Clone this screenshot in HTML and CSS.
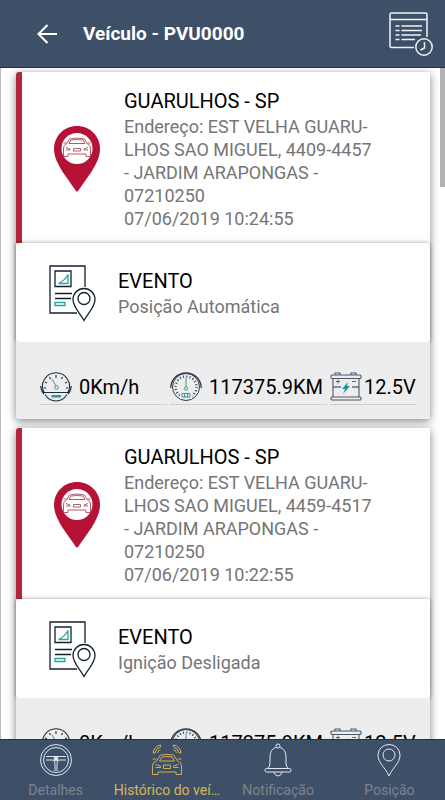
FILE: index.html
```html
<!DOCTYPE html>
<html lang="pt-BR">
<head>
<meta charset="utf-8">
<meta name="viewport" content="width=device-width, initial-scale=1">
<title>Veículo - PVU0000</title>
<link rel="stylesheet" href="styles.css">
</head>
<body>
<svg class="sprite" aria-hidden="true">
  <symbol id="car-pin" viewBox="0 0 46 66">
    <path fill="#b51235" d="M23 0C10 0 0 10 0 23c0 8 4 15 8 22l14 20q1 1 2 0l14-20c4-7 8-14 8-22C46 10 36 0 23 0z"/>
    <circle cx="23" cy="22.500" r="15.500" fill="#fff"/>
    <g fill="none" stroke="#a94a5f" stroke-width=".9">
      <path d="M12.500 18l3-5q7.500-2 15 0l3 5M15 17.500l2-3.500q6-1 12 0l2 3.500zM9.500 17h3M36.500 17h-3M12.500 18q-3 1-3 4v8.500h4.500V28h18v2.500h4.500V22q0-3-3-4M12 21.500l4 1.500v1h-4M34 21.500l-4 1.500v1h4M19.500 22.500h7v2.500h-7z"/>
    </g>
  </symbol>
  <symbol id="report" viewBox="0 0 48 58">
    <g fill="none" stroke="#15202f" stroke-width="1.300">
      <path d="M36 23V2H1v47h27"/>
      <path d="M6 7h16v15.500H6zM6 29.500h17M6 34.500h16"/>
      <path d="M35 56.500C31 49 24 43 24 35.500a11 11 0 0 1 22 0C46 43 39 49 35 56.500z"/>
      <circle cx="35" cy="34.500" r="6"/>
    </g>
    <path fill="none" stroke="#2aa3a3" stroke-width="1.300" d="M9.500 19.500q6-2.500 9.500-9v9zM6 38.500h10v3H6z"/>
  </symbol>
  <symbol id="speed" viewBox="0 0 32 32">
    <g fill="none" stroke="#1b2c3d" stroke-width="1.100">
      <path d="M4 21.500A13.500 13.500 0 1 1 28 21.500zM5 23.500q4 6.500 11 6.500t11-6.500M.7 15q.3 5 3.300 8M31.300 15q-.3 5-3.300 8"/>
      <path d="M16 4v3M9.500 6l1 2M22.500 6l-1 2M5 11l2 1M27 11l-2 1M4 17h2M26 17h2"/>
    </g>
    <g fill="none" stroke="#2c98a0"><path d="M12 8l4 7"/><circle cx="16.500" cy="16.500" r="1.800"/></g>
    <path fill="#2c98a0" d="M11.500 24h9.500v2.500h-9.500z"/>
  </symbol>
  <symbol id="odometer" viewBox="0 0 32 32">
    <g fill="none" stroke="#2c3c4e">
      <circle cx="16" cy="16" r="13.500"/>
      <path stroke-width="1.300" d="M.8 17A15.200 15.200 0 0 1 31.200 17"/>
      <circle cx="16" cy="16" r="10.500" stroke-width="2.200" stroke-dasharray="1 2.300"/>
    </g>
    <path fill="#ededed" d="M10 21h12v7H10z"/>
    <g fill="none" stroke="#2c98a0"><path d="M16 7v9M12 22.500h8v3.500h-8zM14.500 23v3M17.500 23v3"/><circle cx="16" cy="17.500" r="1.700"/></g>
  </symbol>
  <symbol id="battery" viewBox="0 0 32 32">
    <g fill="none" stroke="#4b596b" stroke-width="1.100">
      <rect x="1" y="4" width="30" height="3.500" rx="1"/>
      <path d="M5 4V2h5v2M21 4V2h5v2M3 7.500V26M29 7.500V26"/>
      <rect x="1" y="26" width="30" height="3" rx="1"/>
      <path stroke="#1b3555" d="M3 16h8M22 16h7"/>
      <path stroke-width=".9" d="M6 10.500h4M8 8.500v4M22 10.500h4"/>
    </g>
    <path fill="#1f949b" d="M18 11l-6 7h3l-2 5 7-8h-3z"/>
  </symbol>
</svg>

<header class="topbar">
  <button class="icon-button" type="button" aria-label="Voltar">
    <svg width="20" height="20" viewBox="0 0 20 20" fill="none" stroke="#fff" stroke-width="2"><path d="M20 10H2M10.500 1L1.500 10l9 9"/></svg>
  </button>
  <h1 class="topbar-title">Veículo - PVU0000</h1>
  <button class="icon-button" type="button" aria-label="Histórico">
    <svg width="44" height="44" viewBox="0 0 44 44" fill="none" stroke="#eef3f8" stroke-width="1.500">
      <path d="M25 35.500H2.500a1.500 1.500 0 0 1-1.500-1.500V2.500A1.500 1.500 0 0 1 2.500 1h34A1.500 1.500 0 0 1 38 2.500V25M1 7.500h37"/>
      <path d="M6.500 14h4M6.500 18.500h4M6.500 23h4M6.500 27.500h4M12.500 14H33M12.500 18.500H33M12.500 23H32M12.500 27.500H26"/>
      <circle cx="35" cy="35" r="8.200"/><path d="M35.500 30v6l-4 2"/>
    </svg>
  </button>
</header>

<main class="content">
  <article class="card">
    <section class="place">
      <svg class="place-icon"><use href="#car-pin"/></svg>
      <div class="place-text">
        <h2 class="title">GUARULHOS - SP</h2>
        <p class="detail">Endereço: EST VELHA GUARU&shy;LHOS SAO MIGUEL, 4409-4457 - JARDIM ARAPONGAS - 07210250</p>
        <p class="detail">07/06/2019 10:24:55</p>
      </div>
    </section>
    <section class="event">
      <svg class="event-icon"><use href="#report"/></svg>
      <div>
        <h2 class="title">EVENTO</h2>
        <p class="detail">Posição Automática</p>
      </div>
    </section>
    <ul class="stats">
      <li class="stat stat-speed"><svg class="stat-icon"><use href="#speed"/></svg>0Km/h</li>
      <li class="stat stat-distance"><svg class="stat-icon"><use href="#odometer"/></svg>117375.9KM</li>
      <li class="stat stat-battery"><svg class="stat-icon"><use href="#battery"/></svg>12.5V</li>
    </ul>
  </article>

  <article class="card">
    <section class="place">
      <svg class="place-icon"><use href="#car-pin"/></svg>
      <div class="place-text">
        <h2 class="title">GUARULHOS - SP</h2>
        <p class="detail">Endereço: EST VELHA GUARU&shy;LHOS SAO MIGUEL, 4459-4517 - JARDIM ARAPONGAS - 07210250</p>
        <p class="detail">07/06/2019 10:22:55</p>
      </div>
    </section>
    <section class="event">
      <svg class="event-icon"><use href="#report"/></svg>
      <div>
        <h2 class="title">EVENTO</h2>
        <p class="detail">Ignição Desligada</p>
      </div>
    </section>
    <ul class="stats">
      <li class="stat stat-speed"><svg class="stat-icon"><use href="#speed"/></svg>0Km/h</li>
      <li class="stat stat-distance"><svg class="stat-icon"><use href="#odometer"/></svg>117375.9KM</li>
      <li class="stat stat-battery"><svg class="stat-icon"><use href="#battery"/></svg>12.5V</li>
    </ul>
  </article>
  <span class="scroll-thumb"></span>
</main>

<nav class="tabs">
  <a class="tab" href="#detalhes">
    <svg class="tab-icon" viewBox="0 0 32 32"><circle cx="16" cy="16" r="15.500"/><circle cx="16" cy="16" r="12.500"/><path d="M6 12.500h20M6 16h7q1.500 1 2 4v7M26 16h-7q-1.500 1-2 4v7"/><circle cx="16" cy="15" r="2" fill="#dfe9f2"/></svg>
    Detalhes
  </a>
  <a class="tab tab-active" href="#historico" aria-current="page">
    <svg class="tab-icon" viewBox="0 0 32 32"><path d="M5.500 17l4-6q6.500-1 13 0l4 6M8.500 17l2.500-4q5-1 10 0l2.500 4zM1.500 15h4M30.500 15h-4M5.500 17q-4 1-4 5v8.500H7V28h18v2.500h5.500V22q0-4-4-5M4.500 20.500l5 1.500v1.500h-5M27.500 20.500l-5 1.500v1.500h5M12.500 21h7v3.500h-7z"/><path d="M2 9Q3 2 9.500 1v2Q5 4 4 9zM6.500 9Q7 6 9.500 5.500M30 9Q29 2 22.500 1v2Q27 4 28 9zM25.500 9Q25 6 22.500 5.500"/></svg>
    Histórico do veí…
  </a>
  <a class="tab" href="#notificacao">
    <svg class="tab-icon" viewBox="0 0 32 32"><circle cx="16" cy="2" r="2"/><path d="M14 3.500Q8 5 8 13v6q0 4-2 5M18 3.500q6 1.500 6 9.500v6q0 4 2 5M12 28q1 4 4 4t4-4"/><rect x="3" y="24.500" width="26" height="3.500" rx="1.500"/></svg>
    Notificação
  </a>
  <a class="tab" href="#posicao">
    <svg class="tab-icon" viewBox="0 0 32 32"><path d="M16 32C12 23 5 19 5 11a11 10.500 0 0 1 22 0c0 8-7 12-11 21z"/><circle cx="16" cy="11" r="6"/></svg>
    Posição
  </a>
</nav>
</body>
</html>
```
FILE: styles.css
```css
* {
  box-sizing: border-box;
  margin: 0;
  padding: 0;
}

body {
  display: flex;
  flex-direction: column;
  height: 100vh;
  background: #fff;
  color: #000;
  font-family: Roboto, "Liberation Sans", sans-serif;
}

.sprite {
  position: absolute;
  width: 0;
  height: 0;
}

.topbar {
  flex: none;
  display: flex;
  align-items: center;
  gap: 26px;
  height: 68px;
  padding: 0 12px 0 37px;
  background: #3e5068;
  border-bottom: 1px solid #1d3350;
}

.topbar-title {
  flex: 1;
  font-size: 19px;
  font-weight: 700;
  line-height: 24px;
  color: #fff;
}

.icon-button {
  display: flex;
  border: 0;
  background: none;
}

.content {
  position: relative;
  flex: 1;
  min-height: 0;
  overflow: hidden;
  display: flex;
  flex-direction: column;
  gap: 9px;
  padding: 4px 15px 0 15px;
  border-left: 1px solid #bcbcbc;
}

.scroll-thumb {
  position: absolute;
  top: 0;
  right: 0;
  width: 5px;
  height: 119px;
  background: #b3b3b3;
}

.card {
  flex: none;
  border-radius: 3px;
  box-shadow: 0 2px 8px rgba(0, 0, 0, 0.5);
}

.place {
  display: flex;
  align-items: center;
  gap: 24px;
  padding: 16px 54px 13px 32px;
  background: #fff;
  border-left: 6px solid #b3263a;
  border-radius: 3px 3px 0 0;
}

.place-icon {
  flex: none;
  width: 46px;
  height: 66px;
}

.place-text {
  flex: 1;
}

.title {
  font-size: 20px;
  font-weight: 400;
  line-height: 27px;
}

.detail {
  font-size: 18px;
  line-height: 23px;
  color: #757575;
}

.event {
  position: relative;
  display: flex;
  align-items: center;
  gap: 21px;
  height: 99px;
  padding: 0 33px;
  background: #fff;
  border-radius: 3px;
  box-shadow: 0 0 4px rgba(0, 0, 0, 0.4);
}

.event-icon {
  flex: none;
  width: 48px;
  height: 58px;
}

.stats {
  position: relative;
  display: flex;
  gap: 3px;
  padding: 28px 14px 14px 24px;
  background: #ededed;
  border-radius: 0 0 3px 3px;
  list-style: none;
}

.stat {
  display: flex;
  align-items: center;
  gap: 7px;
  height: 35px;
  border-bottom: 1px solid #cfcfcf;
  font-size: 20px;
  line-height: 24px;
  white-space: nowrap;
}

.stat-speed {
  flex: 127;
}

.stat-distance {
  flex: 157;
}

.stat-battery {
  flex: 86;
  gap: 2px;
}

.stat-icon {
  flex: none;
  width: 32px;
  height: 32px;
}

.tabs {
  flex: none;
  display: grid;
  grid-template-columns: repeat(4, 1fr);
  height: 61px;
  padding-top: 4px;
  background: #3e5068;
  border-top: 1px solid #1d3350;
}

.tab {
  display: flex;
  flex-direction: column;
  align-items: center;
  gap: 4px;
  font-size: 14px;
  line-height: 20px;
  color: #7d838b;
  text-decoration: none;
  white-space: nowrap;
}

.tab-active {
  color: #d9b556;
}

.tab-icon {
  flex: none;
  width: 32px;
  height: 32px;
  fill: none;
  stroke: #dfe9f2;
  overflow: visible;
}

.tab-active .tab-icon {
  stroke: #d3ae55;
}
```
